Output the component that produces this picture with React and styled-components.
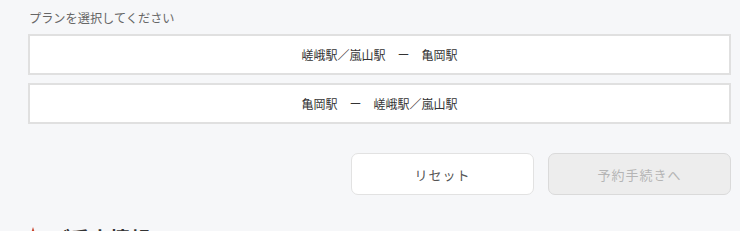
import React from "react";
import styled, { createGlobalStyle } from "styled-components";

const GlobalStyle = createGlobalStyle`
  html, body {
    margin: 0;
    padding: 0;
    background: #f6f7f9;
    font-family: "Noto Sans CJK JP", "Noto Sans", sans-serif;
    overflow: hidden;
  }
`;

const plans = [
  "嵯峨駅／嵐山駅　ー　亀岡駅",
  "亀岡駅　ー　嵯峨駅／嵐山駅",
];

export default function App() {
  return (
    <Page>
      <GlobalStyle />
      <Label>プランを選択してください</Label>
      <PlanList>
        {plans.map((p) => (
          <PlanOption key={p}>{p}</PlanOption>
        ))}
      </PlanList>

      <Actions>
        <ActionButton>リセット</ActionButton>
        <ActionButton disabled>予約手続きへ</ActionButton>
      </Actions>

      <SectionTitle>
        <Mark />
        ご乗車情報
      </SectionTitle>
    </Page>
  );
}

/* ===== styled-components ===== */
const Page = styled.div`
  width: 703px;
  padding: 10px 0 0 28px;
  box-sizing: content-box;
`;

const Label = styled.div`
  font-size: 12.2px;
  line-height: 16px;
  color: #666;
  margin-bottom: 8px;
  padding-left: 1px;
`;

const PlanList = styled.div`
  display: flex;
  flex-direction: column;
  gap: 8px;
`;

const PlanOption = styled.div`
  height: 41px;
  box-sizing: border-box;
  border: 2px solid #e0e0e0;
  background: #fff;
  display: flex;
  align-items: center;
  justify-content: center;
  font-size: 12px;
  color: #333;
`;

const Actions = styled.div`
  display: flex;
  justify-content: flex-end;
  gap: 14px;
  margin-top: 29px;
`;

const ActionButton = styled.button`
  width: 183px;
  height: 42px;
  border-radius: 7px;
  border: 1px solid ${(p) => (p.disabled ? "#dadada" : "#e2e2e2")};
  background: ${(p) => (p.disabled ? "#ededed" : "#fff")};
  color: ${(p) => (p.disabled ? "#b5b5b5" : "#555")};
  font-family: inherit;
  font-size: 13px;
  letter-spacing: 1px;
  cursor: pointer;
`;

const SectionTitle = styled.h2`
  display: flex;
  align-items: flex-start;
  gap: 12px;
  margin: 30px 0 0;
  font-size: 20px;
  font-weight: 700;
  color: #333;
  line-height: 28px;
`;

const Mark = styled.span`
  margin-top: 2px;
  width: 0;
  height: 0;
  border-left: 5px solid transparent;
  border-right: 5px solid transparent;
  border-bottom: 16px solid #c9432b;
`;
